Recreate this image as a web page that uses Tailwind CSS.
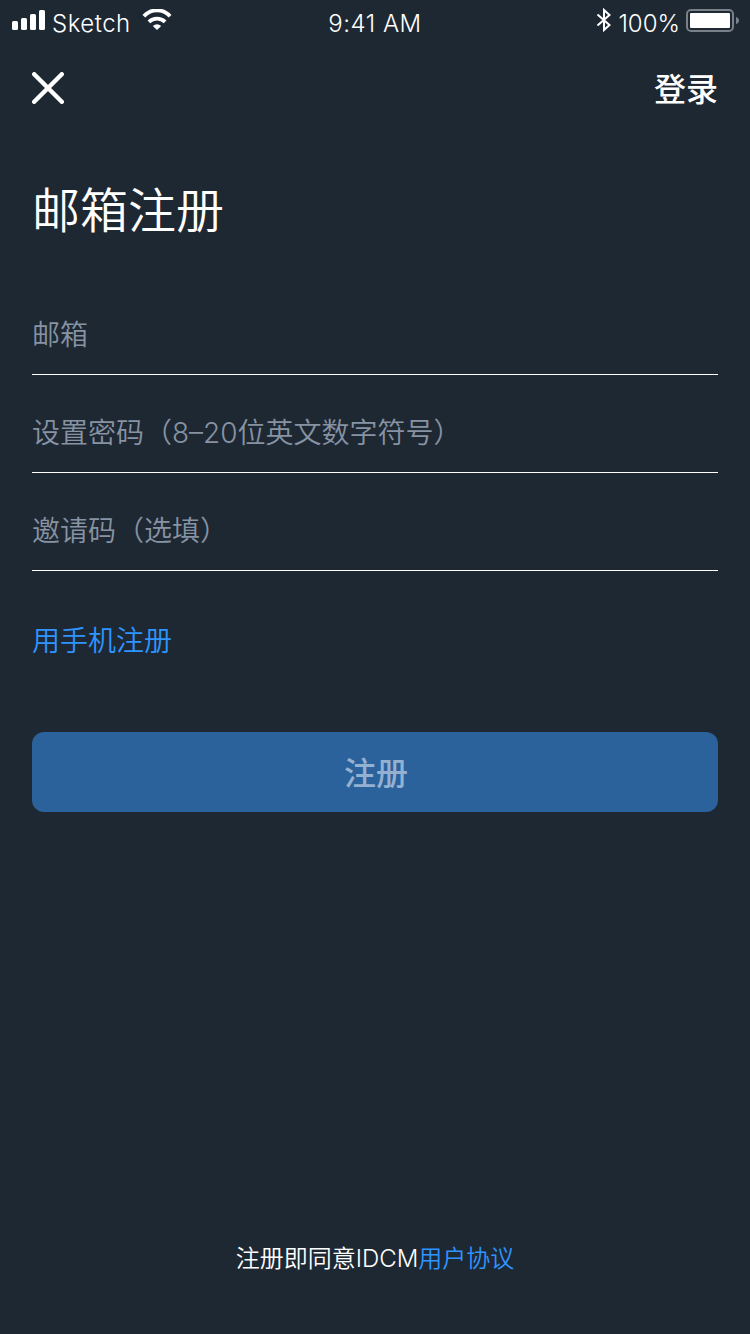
<!DOCTYPE html>
<html lang="zh-CN">
<head>
<meta charset="utf-8">
<title>邮箱注册</title>
<script src="https://cdn.jsdelivr.net/npm/@tailwindcss/browser@4"></script>
</head>
<body class="w-[750px] h-[1334px] overflow-hidden bg-[#1e2833] text-white font-['Inter','Noto_Sans_CJK_SC',sans-serif] flex flex-col">
<header class="h-10 shrink-0 grid grid-cols-3 pl-3 pr-[10px] text-2xl leading-[47px]">
  <div class="flex">
    <svg class="mt-[10px] w-[33px] h-5 shrink-0" viewBox="0 0 33 20" fill="#fff"><rect y="11" width="6" height="9" rx="1.5"/><rect x="9" y="8" width="6" height="12" rx="1.5"/><rect x="18" y="4" width="6" height="16" rx="1.5"/><rect x="27" width="6" height="20" rx="1.5"/></svg>
    <span class="ml-[7px] w-[79px] font-[350] tracking-[0.5px]">Sketch</span>
    <svg class="ml-[11px] mt-[9px] w-[30px] h-[22px] shrink-0" viewBox="0 0 30 22" fill="none" stroke="#fff" stroke-width="3.8"><path d="M1.900 7.200C9 -.6 21 -.6 28.100 7.200M6.900 12.900C11.500 8.600 18.500 8.600 23.100 12.900"/><path d="M10.800 17Q15 13.600 19.200 17L15 21Z" fill="#fff" stroke="none"/></svg>
  </div>
  <span class="pr-0.5 text-center leading-[48px] font-[350] tracking-[0.5px]">9:41 AM</span>
  <div class="flex justify-end">
    <svg class="mt-2 w-4 h-6 shrink-0" viewBox="0 0 16 24" fill="none" stroke="#fff" stroke-width="2"><path d="M1.500 6.500L13.500 17L8 22V2L13.500 7L1.500 17.500"/></svg>
    <span class="ml-[6px] font-[350]">100%</span>
    <svg class="ml-[6px] mt-[9px] w-[54px] h-6 shrink-0" viewBox="0 0 54 24"><rect x="1" y="1" width="46" height="21" rx="4" fill="none" stroke="#798087" stroke-width="2"/><rect x="4" y="4" width="40" height="15" rx="1" fill="#fff"/><path d="M50 8Q53 9 53 11.500T50 15Z" fill="#798087"/></svg>
  </div>
</header>
<main class="px-8 flex-1 flex flex-col">
  <nav class="h-24 flex items-center justify-between">
    <svg class="w-8 h-8" viewBox="0 0 32 32" stroke="#fff" stroke-width="4.4" stroke-linecap="round"><path d="M2.200 2.200L29.800 29.800M29.800 2.200L2.200 29.800"/></svg>
    <span class="pt-1 text-[32px] font-medium leading-[48px]">登录</span>
  </nav>
  <h1 class="mt-[39px] text-[48px] leading-[72px] font-[350]">邮箱注册</h1>
  <div class="mt-[30px] h-[98px] border-b border-white text-[28px] leading-[116px] font-[350] text-[#8793a3]">邮箱</div>
  <div class="h-[98px] border-b border-white text-[28px] leading-[116px] font-[350] text-[#8793a3]">设置密码（8–20位英文数字符号）</div>
  <div class="h-[98px] border-b border-white text-[28px] leading-[116px] font-[350] text-[#8793a3]">邀请码（选填）</div>
  <a class="mt-[49px] text-[28px] leading-[42px] font-[350] text-[#2e94ff]">用手机注册</a>
  <button class="mt-[70px] h-20 pt-[3px] pl-[2px] rounded-xl bg-[#2b629b] text-[#95b1d2] text-[32px] font-medium">注册</button>
</main>
<footer class="h-24 text-center text-2xl leading-[41px] font-[350]">注册即同意<span class="font-light">IDCM</span><a class="text-[#2e94ff]">用户协议</a></footer>
</body>
</html>
